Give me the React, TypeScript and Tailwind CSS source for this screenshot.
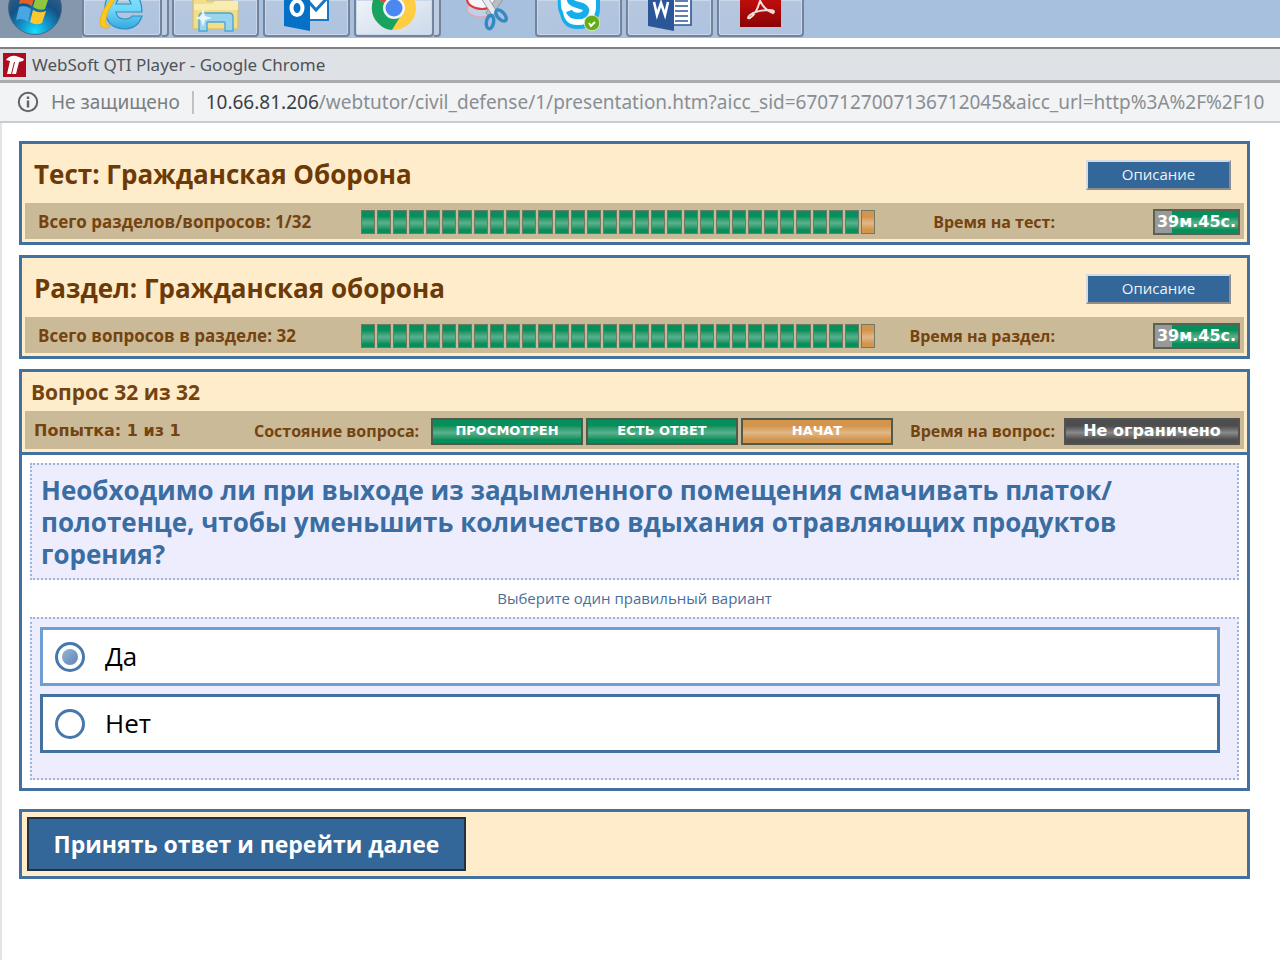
import { useState } from 'react';
import type { ReactNode } from 'react';

const verdana = "font-['DejaVu_Sans',sans-serif]";
const tahoma = "font-['Open_Sans','Noto_Sans',sans-serif]";
const segoe = "font-['Noto_Sans',sans-serif]";

const greenFill = 'bg-linear-to-b from-[#058f5b] from-25% via-[#57b18d] via-55% to-[#058f5b] to-85%';
const orangeFill = 'bg-linear-to-b from-[#d3954c] from-25% via-[#e2b787] via-55% to-[#d3954c] to-85%';
const grayFill = 'bg-linear-to-b from-[#4d4d4d] from-25% via-[#8a8a8a] via-55% to-[#4d4d4d] to-85%';

/* ---------- taskbar icons ---------- */

function StartOrb() {
  return (
    <svg width="56" height="38" viewBox="0 0 56 38" aria-hidden="true">
      <defs>
        <radialGradient id="orb" cx="50%" cy="95%" r="85%">
          <stop offset="0" stopColor="#16e0ff" />
          <stop offset="0.3" stopColor="#1398cf" />
          <stop offset="0.65" stopColor="#145284" />
          <stop offset="1" stopColor="#3a5f85" />
        </radialGradient>
      </defs>
      <circle cx="28" cy="8" r="26.5" fill="url(#orb)" stroke="#4b6885" strokeWidth="1" />
      <path d="M15 -8q7 -2 13 2l-3 12q-6 -4 -13 -2z" fill="#e2622b" />
      <path d="M29 -4q7 4 13 1l-4 12q-6 2 -12 -2z" fill="#8fc63f" />
      <path d="M12 7q6 -3 12 2l-3 13q-6 -5 -12 -2z" fill="#4aa5e2" />
      <path d="M26 10q6 4 13 1l-4 12q-6 3 -12 -1z" fill="#ffc72e" />
    </svg>
  );
}

function ExplorerE() {
  return (
    <svg width="46" height="38" viewBox="0 0 46 38" aria-hidden="true">
      <defs>
        <linearGradient id="ie" x1="0" y1="0" x2="0" y2="1">
          <stop offset="0" stopColor="#8be3fb" />
          <stop offset="0.5" stopColor="#6fd6f8" />
          <stop offset="1" stopColor="#35a6de" />
        </linearGradient>
      </defs>
      <path
        d="M43 12H17q1 7 9 7 5 0 7-3h10q-4 13-18 13Q6 28 6 8 6-9 25-9 43-9 43 12zM17 4h15Q31-2 25-2 18-2 17 4z"
        fill="url(#ie)"
        stroke="#2a8fc6"
        strokeWidth="1.2"
      />
      <path d="M16-6Q0 12 1 24q2 8 12 1-8 2-6-6Q9 8 20-5z" fill="#fcc81c" stroke="#e0a314" strokeWidth="0.6" />
    </svg>
  );
}

function FolderIcon() {
  return (
    <svg width="50" height="38" viewBox="0 0 50 38" aria-hidden="true">
      <path d="M2-4h14v5h26l5 3v25H2z" fill="#f3dd88" stroke="#d6b95a" />
      <path d="M3 4h18l3-3h23v9H3z" fill="#f9ecb0" />
      <path
        d="M8 17q0-4 4-4h26q4 0 4 4v14h-8v-8q0-1-1-1H17q-1 0-1 1v8H8z"
        fill="#9bd4ee"
        stroke="#4ea7d1"
        strokeWidth="1.4"
      />
      <path d="M12 8l2 8 7 2-7 2-2 7-2-7-6-2 6-2z" fill="#fff" opacity="0.8" />
    </svg>
  );
}

function OutlookIcon() {
  return (
    <svg width="48" height="38" viewBox="0 0 48 38" aria-hidden="true">
      <path d="M24-4h21v24H24z" fill="#fff" stroke="#1976c8" strokeWidth="2" />
      <path d="M25 1l8 9L45-3" fill="none" stroke="#1976c8" strokeWidth="3" />
      <path d="M1-6h26v37L1 26z" fill="#0470c6" />
      <ellipse cx="14" cy="8" rx="5.5" ry="7" fill="none" stroke="#fff" strokeWidth="4" />
    </svg>
  );
}

function ChromeIcon() {
  return (
    <svg width="46" height="38" viewBox="0 0 46 38" aria-hidden="true">
      <circle cx="23" cy="8" r="22" fill="#ffcd41" />
      <path d="M23 8L3-3Q-3 13 7 23q6 7 14 7l11-18z" fill="#1aa35f" />
      <path d="M23 8L3-3Q8-14 23-14T43-2H23z" fill="#dc4538" />
      <circle cx="23" cy="8" r="11" fill="#f4f4f4" />
      <circle cx="23" cy="8" r="8.5" fill="#4a87f0" />
    </svg>
  );
}

function ScissorsIcon() {
  return (
    <svg width="48" height="38" viewBox="0 0 48 38" aria-hidden="true">
      <ellipse cx="17" cy="9" rx="14" ry="8" fill="#c3cfe3" stroke="#dba9b8" strokeWidth="1.5" />
      <ellipse cx="18" cy="-1" rx="15" ry="10" fill="#f7f7fa" stroke="#dd3c3c" strokeWidth="2" />
      <path d="M34-5L22 13l4 5L40-2z" fill="#b9bec6" stroke="#858b94" strokeWidth="0.8" />
      <path d="M15-5l13 20 5-3L22-6z" fill="#e7eaee" stroke="#858b94" strokeWidth="0.8" />
      <ellipse cx="26" cy="22" rx="3.6" ry="6.8" fill="none" stroke="#3389c2" strokeWidth="3.4" transform="rotate(10 26 22)" />
      <ellipse cx="37" cy="15.5" rx="3.6" ry="6.8" fill="none" stroke="#3389c2" strokeWidth="3.4" transform="rotate(-42 37 15.5)" />
    </svg>
  );
}

function SkypeIcon() {
  return (
    <svg width="48" height="38" viewBox="0 0 48 38" aria-hidden="true">
      <path d="M3-6H45V8q0 8-4 13-8 9-19 8Q8 29 5 14 2 10 3-6z" fill="#14aeec" />
      <path d="M6-6H41V7q0 7-4 11-6 8-15 7Q10 25 8 12 5 8 6-6z" fill="#fff" />
      <path d="M32-2q-3-4-9-4-8 0-8 5 0 4 8 6 9 2 8 6-1 5-8 5-7 0-9-5" fill="none" stroke="#14aeec" strokeWidth="6.5" />
      <circle cx="37" cy="23" r="7.8" fill="#64ad18" stroke="#d4ebb8" />
      <path d="M34 23l2 3 4-4" fill="none" stroke="#fff" strokeWidth="2" />
    </svg>
  );
}

function WordIcon() {
  return (
    <svg width="48" height="38" viewBox="0 0 48 38" aria-hidden="true">
      <path d="M26-4h19v29H26z" fill="#fff" stroke="#2b579a" strokeWidth="1.6" />
      <path d="M29 1h13M29 6h13M29 11h13M29 16h13M29 21h13" stroke="#2b579a" strokeWidth="1.6" />
      <path d="M2-6h26v37L2 26z" fill="#2b579a" />
      <path d="M8 2l3 13 4-12 4 12 3-13" fill="none" stroke="#fff" strokeWidth="2.6" />
    </svg>
  );
}

function AcrobatIcon() {
  return (
    <svg width="44" height="38" viewBox="0 0 44 38" aria-hidden="true">
      <defs>
        <linearGradient id="pdf" x1="0" y1="0" x2="0" y2="1">
          <stop offset="0" stopColor="#c9100f" />
          <stop offset="1" stopColor="#8a0404" />
        </linearGradient>
      </defs>
      <path d="M1-6h41v33H1z" fill="url(#pdf)" />
      <path
        d="M20-3q3 12 14 16 3-3-4-3-12 0-19 5-4 4 0 3 7-4 11-21"
        fill="none"
        stroke="#f3dede"
        strokeWidth="2"
      />
    </svg>
  );
}

function TaskButton({ label, grouped, active, children }: { label: string; grouped?: boolean; active?: boolean; children: ReactNode }) {
  return (
    <button
      type="button"
      aria-label={label}
      className={`flex h-[37px] justify-center overflow-hidden rounded-b-[4px] border-2 border-t-0 border-[#74839a] shadow-[inset_0_0_0_1px_#c9d8ea] ${
        grouped ? 'w-20' : 'w-[87px]'
      } ${active ? 'bg-linear-to-br from-[#f1f4f9] to-[#cbd9ea]' : 'bg-linear-to-br from-[#b7c8df] to-[#adc3df]'}`}
    >
      {children}
    </button>
  );
}

function StackEdge() {
  return <span className="h-[37px] w-[7px] rounded-br-[4px] border-r-2 border-b-2 border-[#74839a] bg-[#bccde2]" />;
}

function Taskbar() {
  return (
    <nav aria-label="Панель задач" className="flex h-[38px] overflow-hidden bg-[#a6c0dd]">
      <button type="button" aria-label="Пуск" className="flex w-[82px] justify-start bg-[#8597ad] pl-[7px]">
        <StartOrb />
      </button>
      <div className="flex pr-[3px]">
        <TaskButton label="Internet Explorer" grouped><ExplorerE /></TaskButton>
        <StackEdge />
      </div>
      <div className="flex gap-1">
        <TaskButton label="Проводник"><FolderIcon /></TaskButton>
        <TaskButton label="Outlook"><OutlookIcon /></TaskButton>
        <TaskButton label="Chrome" grouped active><ChromeIcon /></TaskButton>
      </div>
      <div className="flex w-[101px]">
        <StackEdge />
        <button type="button" aria-label="Ножницы" className="flex flex-1 justify-center">
          <ScissorsIcon />
        </button>
      </div>
      <div className="flex gap-1">
        <TaskButton label="Skype"><SkypeIcon /></TaskButton>
        <TaskButton label="Word"><WordIcon /></TaskButton>
        <TaskButton label="Acrobat"><AcrobatIcon /></TaskButton>
      </div>
    </nav>
  );
}

/* ---------- browser window ---------- */

function WindowHeader() {
  return (
    <header className={`mt-[9px] ${segoe}`}>
      <div className="flex h-9 items-center gap-[6px] border-t-2 border-b-3 border-t-[#808080] border-b-[#a9abad] bg-[#dee1e6] pl-[3px]">
        <svg width="23" height="24" viewBox="0 0 23 24" aria-hidden="true">
          <path d="M0 0h23v24H0z" fill="#ad0c1f" />
          <path d="M3 7q4-5 10-4 3 1 8 3l-1 2-4 1-3 12h-4l3-12h-1L8 21H4L7 8z" fill="#fff" />
        </svg>
        <h1 className="text-[17px] text-[#4f5255]">WebSoft QTI Player - Google Chrome</h1>
      </div>
      <div className="flex h-10 items-center overflow-hidden border-b-2 border-[#c9cbcd] bg-[#f1f3f4] pl-[17px] text-[19px] whitespace-nowrap">
        <svg width="22" height="22" viewBox="0 0 22 22" className="shrink-0" aria-hidden="true">
          <circle cx="11" cy="11" r="9.2" fill="none" stroke="#606468" strokeWidth="2" />
          <path d="M11 9.5v7M11 5.5v2.5" stroke="#606468" strokeWidth="2.4" />
        </svg>
        <span className="ml-3 text-[#7b7e82]">Не защищено</span>
        <span className="mx-3 h-[23px] w-[2px] shrink-0 bg-[#bfc1c4]" />
        <span className="text-[#3c4043]">10.66.81.206</span>
        <span className="text-[#8a8e92]">
          /webtutor/civil_defense/1/presentation.htm?aicc_sid=6707127007136712045&amp;aicc_url=http%3A%2F%2F10
        </span>
      </div>
    </header>
  );
}

/* ---------- test player ---------- */

const panel = 'border-3 border-[#42719f] bg-[#feecca]';
const strip = 'mx-[3px] mb-[3px] flex items-center bg-[#cbba97]';
const captionBase = 'font-bold text-[#74430f]';
const caption = `text-base ${captionBase}`;

function ProgressBar() {
  return (
    <div role="progressbar" aria-valuenow={31} aria-valuemax={32} aria-label="Пройдено вопросов" className="flex w-[514px] gap-[2px]">
      {Array.from({ length: 32 }, (_, i) => (
        <span key={i} className={`h-6 flex-1 border border-[#6f7a68] ${i < 31 ? greenFill : orangeFill}`} />
      ))}
    </div>
  );
}

function TimeBadge({ value }: { value: string }) {
  return (
    <div className={`flex h-[26px] w-[87px] items-center justify-center border-2 border-[#5c6253] text-base font-bold text-white ${verdana} ${greenFill}`}>
      <span className="flex h-full w-full items-center justify-center bg-linear-to-r from-[#999] from-[21%] to-transparent to-[21%]">{value}</span>
    </div>
  );
}

function SummaryPanel({ title, total, timeLabel, time }: { title: string; total: string; timeLabel: string; time: string }) {
  return (
    <section className={panel}>
      <div className="flex h-[59px] items-center justify-between pr-4 pl-3">
        <h2 className="pt-[2px] text-[26px] font-bold text-[#6b3a07]">{title}</h2>
        <button
          type="button"
          className="mt-[2px] h-[30px] w-[145px] border-2 border-t-[#d6d9df] border-r-[#8e8c8c] border-b-[#8e8c8c] border-l-[#d6d9df] bg-[#336699] text-[15px] text-[#eef3f8]"
        >
          Описание
        </button>
      </div>
      <div className={`${strip} h-9 pt-[2px] pr-1 pl-[13px]`}>
        <p className={`w-[323px] text-[17px] ${captionBase}`}>{total}</p>
        <ProgressBar />
        <p className={`flex-1 pr-[98px] text-right whitespace-nowrap ${caption}`}>{timeLabel}</p>
        <TimeBadge value={time} />
      </div>
    </section>
  );
}

function StateBadge({ fill, children }: { fill: string; children: ReactNode }) {
  return (
    <span className={`flex h-[27px] w-[152px] items-center justify-center border-2 border-[#515a4a] text-[13px] font-bold text-white ${verdana} ${fill}`}>
      {children}
    </span>
  );
}

const question =
  'Необходимо ли при выходе из задымленного помещения смачивать платок/полотенце, чтобы уменьшить количество вдыхания отравляющих продуктов горения?';
const options = ['Да', 'Нет'];

function QuestionPanel() {
  const [answer, setAnswer] = useState('Да');
  return (
    <section className="border-3 border-[#42719f] bg-white">
      <div className="border-b-3 border-[#42719f] bg-[#feecca]">
        <h2 className="flex h-[39px] items-center pt-[3px] pl-[9px] text-[21px] font-bold text-[#74430f]">Вопрос 32 из 32</h2>
        <div className={`${strip} h-[38px] pt-[2px] pr-1 pl-[9px]`}>
          <p className={`w-[220px] ${caption} ${verdana}`}>Попытка: 1 из 1</p>
          <p className={`w-[177px] whitespace-nowrap ${caption}`}>Состояние вопроса:</p>
          <div className="flex gap-[3px]">
            <StateBadge fill={greenFill}>ПРОСМОТРЕН</StateBadge>
            <StateBadge fill={greenFill}>ЕСТЬ ОТВЕТ</StateBadge>
            <StateBadge fill={orangeFill}>НАЧАТ</StateBadge>
          </div>
          <p className={`flex-1 pr-[9px] text-right whitespace-nowrap ${caption}`}>Время на вопрос:</p>
          <span className={`flex h-[27px] w-[176px] items-center justify-center border-2 border-[#515151] text-base font-bold text-white ${verdana} ${grayFill}`}>
            Не ограничено
          </span>
        </div>
      </div>
      <div className="p-2">
        <p className="border-2 border-dotted border-[#9db5d6] bg-[#eeedfe] px-[9px] pt-[9px] pb-2 text-[26px] leading-8 font-bold text-[#3a6da1]">
          {question}
        </p>
        <p id="hint" className="flex h-[37px] items-center justify-center text-[15px] text-[#4a6d9c]">
          Выберите один правильный вариант
        </p>
        <div role="radiogroup" aria-labelledby="hint" className="flex flex-col gap-2 border-2 border-dotted border-[#9db5d6] bg-[#eeedfe] pt-2 pr-[17px] pb-[25px] pl-2">
          {options.map((o) => (
            <label
              key={o}
              className={`flex h-[59px] items-center gap-5 border-3 bg-white pl-3 text-[26px] text-black ${
                answer === o ? 'border-[#6f9fd2]' : 'border-[#42719f]'
              }`}
            >
              <input
                type="radio"
                name="answer"
                checked={answer === o}
                onChange={() => setAnswer(o)}
                className="size-[30px] appearance-none rounded-full border-3 border-[#4678ab] bg-white bg-clip-content p-1 checked:bg-linear-to-br checked:from-[#a3c3d2] checked:to-[#5676b8]"
              />
              {o}
            </label>
          ))}
        </div>
      </div>
    </section>
  );
}

export default function App() {
  return (
    <div className="min-h-screen bg-white">
      <Taskbar />
      <WindowHeader />
      <main className={`flex min-h-[837px] flex-col border-l-2 border-[#e3e3ea] pt-[18px] pr-[30px] pb-8 pl-[17px] ${tahoma}`}>
        <div className="flex flex-col gap-[10px]">
          <SummaryPanel title="Тест: Гражданская Оборона" total="Всего разделов/вопросов: 1/32" timeLabel="Время на тест:" time="39м.45с." />
          <SummaryPanel title="Раздел: Гражданская оборона" total="Всего вопросов в разделе: 32" timeLabel="Время на раздел:" time="39м.45с." />
          <QuestionPanel />
        </div>
        <div className={`mt-[18px] p-[5px] ${panel}`}>
          <button type="button" className="h-[54px] w-[439px] border-2 border-[#22313f] bg-[#336699] text-[23px] font-bold text-white">
            Принять ответ и перейти далее
          </button>
        </div>
      </main>
    </div>
  );
}
